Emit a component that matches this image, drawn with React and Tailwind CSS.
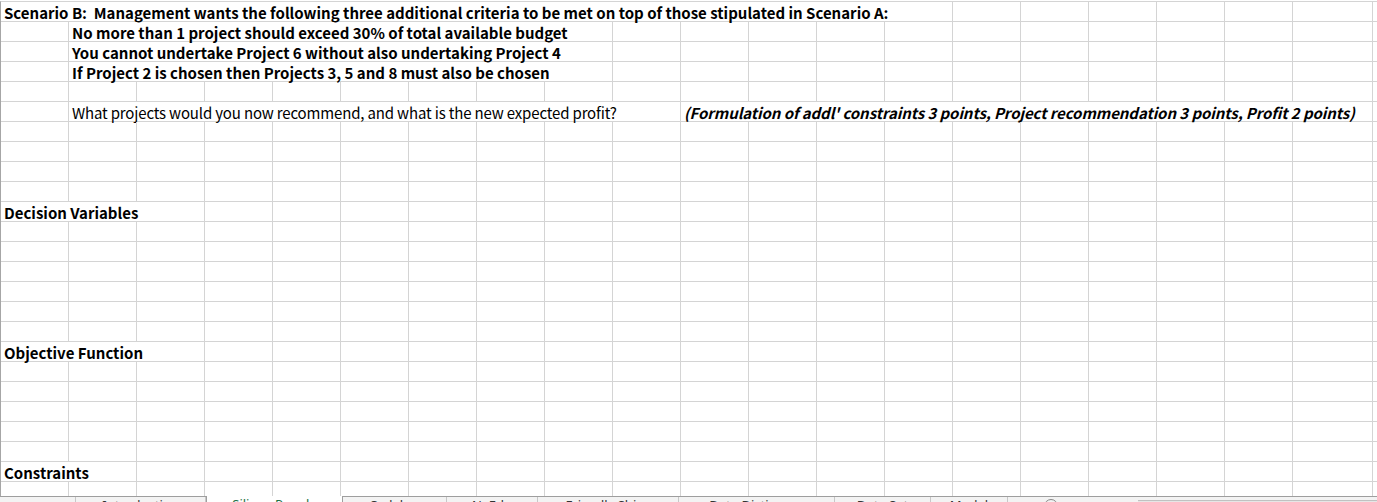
import React from "react";

const LINE = "border-[#d4d4d4]";

const rows = [
  [
    {
      c: 0,
      span: 14,
      text: "Scenario B:  Management wants the following three additional criteria to be met on top of those stipulated in Scenario A:",
      cls: "font-bold",
    },
  ],
  [{ c: 1, span: 8, text: "No more than 1 project should exceed 30% of total available budget", cls: "font-bold" }],
  [{ c: 1, span: 8, text: "You cannot undertake Project 6 without also undertaking Project 4", cls: "font-bold" }],
  [{ c: 1, span: 8, text: "If Project 2 is chosen then Projects 3, 5 and 8 must also be chosen", cls: "font-bold" }],
  [],
  [
    {
      c: 1,
      span: 9,
      text: "What projects would you now recommend, and what is the new expected profit?",
      cls: "tracking-[-0.16px]",
    },
    {
      c: 10,
      span: 10,
      text: "(Formulation of addl' constraints 3 points, Project recommendation 3 points, Profit 2 points)",
      cls: "font-bold italic tracking-[-0.08px]",
    },
  ],
  [],
  [],
  [],
  [],
  [{ c: 0, span: 3, text: "Decision Variables", cls: "font-bold" }],
  [],
  [],
  [],
  [],
  [],
  [],
  [{ c: 0, span: 3, text: "Objective Function", cls: "font-bold" }],
  [],
  [],
  [],
  [],
  [],
  [{ c: 0, span: 2, text: "Constraints", cls: "font-bold" }],
];

const SPAN = {
  2: "col-span-2",
  3: "col-span-3",
  8: "col-span-8",
  9: "col-span-9",
  10: "col-span-10",
  14: "col-span-14",
};

const GridRow = ({ segments, last }) => {
  const cells = [];
  let c = 0;
  while (c < 21) {
    const seg = segments.find((s) => s.c === c);
    const edge = c === 20 ? "" : "border-r";
    const height = last ? "h-[14px]" : "h-5 border-b";
    if (seg) {
      cells.push(
        <div key={c} className={`${SPAN[seg.span]} ${height} border-r ${LINE} flex items-start pt-px`}>
          <span className={`pl-[3px] whitespace-pre leading-[19px] text-[15px] text-black ${seg.cls}`}>
            {seg.text}
          </span>
        </div>
      );
      c += seg.span;
    } else {
      cells.push(<div key={c} className={`${height} ${edge} ${LINE}`} />);
      c += 1;
    }
  }
  return <div className="grid grid-cols-[repeat(19,68px)_80px_1fr]">{cells}</div>;
};

const tabs = [
  { name: "Introduction", w: "w-[130px]" },
  { name: "Silicon People", w: "w-[137px]", active: true },
  { name: "Cadabra", w: "w-[104px]" },
  { name: "N. Edu", w: "w-[91px]" },
  { name: "Friendly Ships", w: "w-[141px]" },
  { name: "Data Dictionary", w: "w-[156px]" },
  { name: "Data Set", w: "w-[96px]" },
  { name: "Model", w: "w-[77px]" },
];

const SheetTabs = () => (
  <div className="flex h-[6px] shrink-0 border-t border-[#9e9e9e] bg-[#f3f3f3] font-['Noto_Sans',sans-serif] text-[13px] leading-none">
    <div className="w-[76px] border-r border-[#c8c8c8]" />
    {tabs.map((t) =>
      t.active ? (
        <div
          key={t.name}
          className={`${t.w} -mt-px h-[7px] bg-white border-x border-[#9e9e9e] text-[#1e7145] flex justify-center pt-[2px] overflow-hidden`}
        >
          {t.name}
        </div>
      ) : (
        <div
          key={t.name}
          className={`${t.w} border-r border-[#c8c8c8] text-[#333] flex justify-center pt-[2px] overflow-hidden`}
        >
          {t.name}
        </div>
      )
    )}
    <div className="w-[130px] flex pl-[36px] pt-[2px]">
      <div className="w-[14px] h-[14px] rounded-full border border-[#888]" />
    </div>
    <div className="flex-1 mt-[3px] border-t border-[#c1c1c1] bg-[#e6e6e6]" />
  </div>
);

export default function App() {
  return (
    <div className="h-[502px] w-full overflow-hidden bg-white flex flex-col font-['Noto_Sans_CJK_SC','Noto_Sans',sans-serif]">
      <div className={`mt-px border-t border-l ${LINE} border-l-[#a6a6a6]`}>
        {rows.map((segs, i) => (
          <GridRow key={i} segments={segs} />
        ))}
        <GridRow segments={[]} last />
      </div>
      <SheetTabs />
    </div>
  );
}
